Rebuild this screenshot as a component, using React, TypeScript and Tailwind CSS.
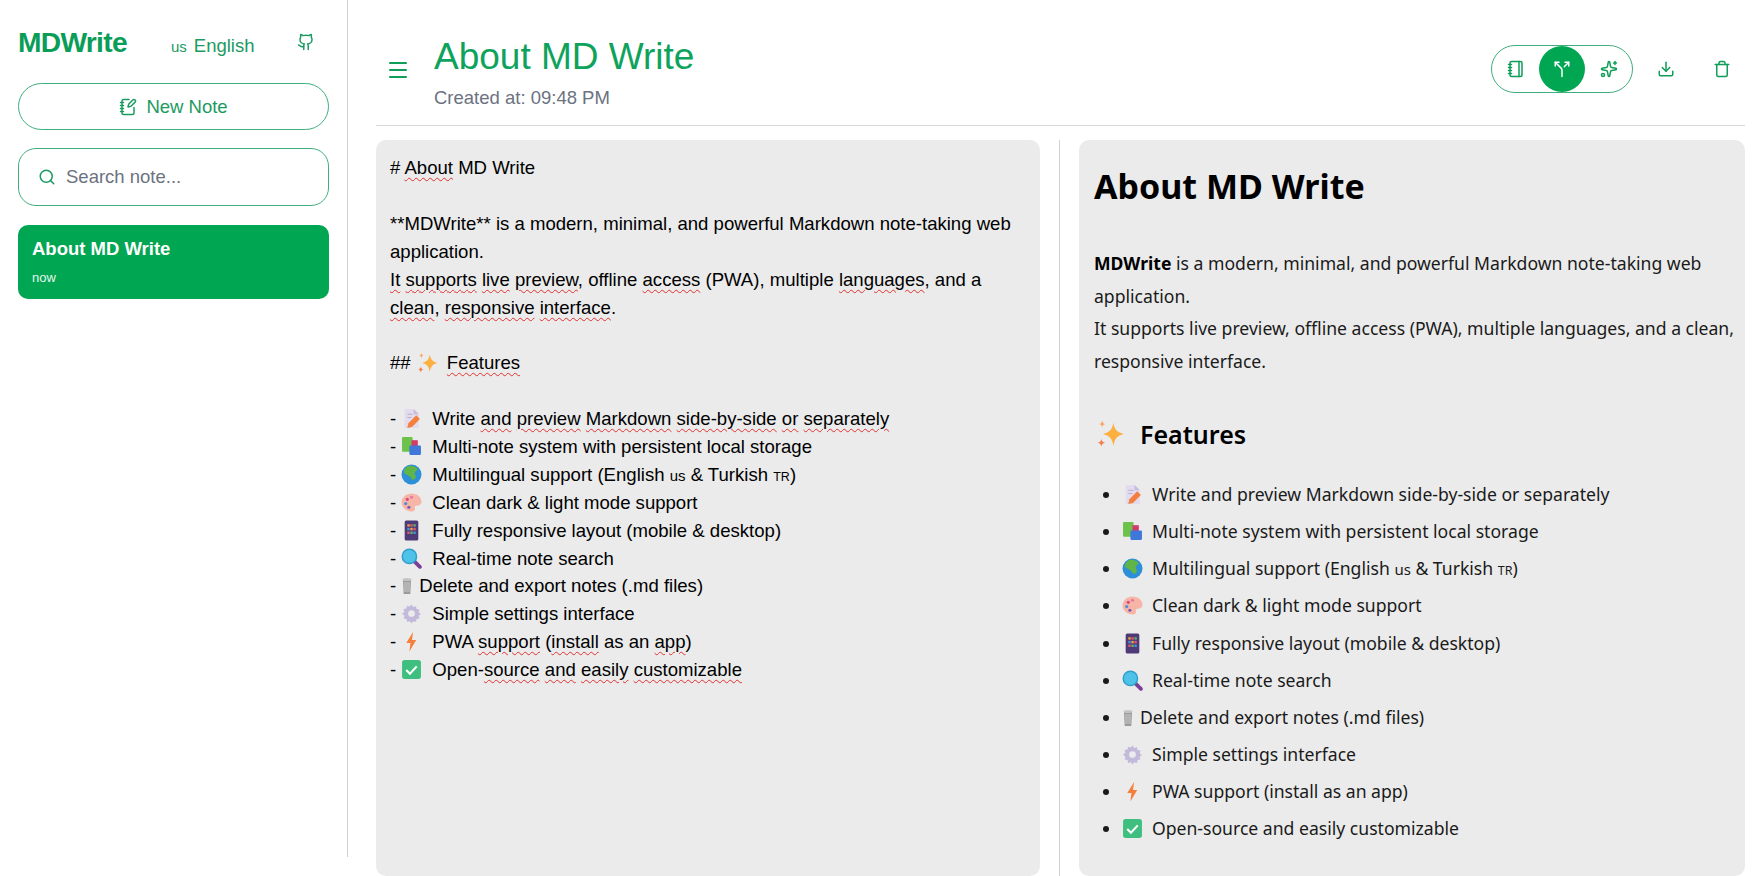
import type { ReactNode } from "react"
import { Download, Github, Menu, Notebook, NotebookPen, Search, Sparkles, Split, Trash } from "lucide-react"

const sans = "font-['Liberation_Sans',Arial,sans-serif]"
const preview = "font-['Noto_Sans',sans-serif]"

// spell-check squiggle under a word in the editor
function S({ children }: { children: ReactNode }) {
  return (
    <span className="underline decoration-wavy decoration-[#e03131] decoration-1 underline-offset-[3px]">{children}</span>
  )
}

function Emoji({ children }: { children: ReactNode }) {
  return (
    <svg viewBox="0 0 20 20" className="inline-block w-[21px] h-[21px] align-[-4px]">
      {children}
    </svg>
  )
}

const sparkleParts = (
  <>
    <path d="M11.500 3c.8 4.400 2.400 6 6.500 7-4.100 1-5.700 2.600-6.500 7.500-.8-4.900-2.400-6.500-6.500-7.500 4.100-1 5.700-2.600 6.500-7z" fill="#fbb040" />
    <path d="M4.500 1.500c.3 1.500.8 2 2 2.300-1.200.3-1.700.8-2 2.200-.3-1.400-.8-1.900-2-2.200 1.200-.3 1.700-.8 2-2.300z" fill="#f9a66c" />
    <path d="M4 13c.3 1.600.9 2.200 2.300 2.500-1.400.3-2 .9-2.300 2.500-.3-1.600-.9-2.200-2.300-2.500 1.400-.3 2-.9 2.300-2.500z" fill="#f47f4f" />
  </>
)

const emojis: Record<string, ReactNode> = {
  memo: (
    <Emoji>
      <path d="M3.500 1h8.500l5 5v13H3.500z" fill="#e3dcee" />
      <path d="M12 1l5 5h-5z" fill="#c9bcd9" />
      <path d="M6 6h5M6 9h4" stroke="#b9aecb" />
      <path d="M6 19l1-4.500 7.500-7.500 3.500 3.500-7.500 7.500z" fill="#f5803e" />
    </Emoji>
  ),
  books: (
    <Emoji>
      <rect x="1" y="1" width="10" height="14" rx="1" fill="#6cc24a" />
      <rect x="10" y="4" width="6" height="12" fill="#d13a6a" />
      <rect x="8" y="9" width="11" height="9" rx="1" fill="#3f78d9" />
    </Emoji>
  ),
  globe: (
    <Emoji>
      <circle cx="10" cy="10" r="9.500" fill="#2c8fd8" />
      <path d="M7 2c3-1 7 0 9 3-1 2-3 2-3 4s2 2 1 4-3 3-4 1-3-3-5-4-3-2-2-4 2-3 4-4z" fill="#5fb548" />
    </Emoji>
  ),
  palette: (
    <Emoji>
      <path d="M10 1.500c5.200 0 9.500 3.400 9.500 7.800 0 2.800-2.300 3.700-4.500 3.700-1.700 0-2.300 1-1.800 2.200.6 1.500-.2 3.300-3.200 3.300-5 0-9.500-3.800-9.500-8.500s4.500-8.500 9.500-8.500z" fill="#f7b5a8" />
      <circle cx="6" cy="7" r="1.500" fill="#d84a7d" />
      <circle cx="10" cy="5" r="1.500" fill="#e8789f" />
      <circle cx="4.500" cy="11" r="1.500" fill="#4b8fd8" />
      <circle cx="7.500" cy="14.500" r="1.500" fill="#7a5bb5" />
    </Emoji>
  ),
  tablet: (
    <Emoji>
      <rect x="3.500" y="0.500" width="13" height="19" rx="1.500" fill="#4f3a78" />
      <rect x="6" y="4" width="2.300" height="2.300" fill="#e8a33d" />
      <rect x="8.900" y="4" width="2.300" height="2.300" fill="#e2566f" />
      <rect x="11.800" y="4" width="2.300" height="2.300" fill="#58b368" />
      <rect x="6" y="7.500" width="2.300" height="2.300" fill="#4b8fd8" />
      <rect x="8.900" y="7.500" width="2.300" height="2.300" fill="#e8a33d" />
      <rect x="11.800" y="7.500" width="2.300" height="2.300" fill="#e2566f" />
      <rect x="6" y="11" width="2.300" height="2.300" fill="#e2566f" />
      <rect x="8.900" y="11" width="2.300" height="2.300" fill="#58b368" />
      <rect x="11.800" y="11" width="2.300" height="2.300" fill="#4b8fd8" />
    </Emoji>
  ),
  search: (
    <Emoji>
      <path d="M12 12l6 6" stroke="#7b3f98" strokeWidth="3.500" strokeLinecap="round" />
      <circle cx="8" cy="8" r="6.800" fill="#4ec2e8" stroke="#2f9fca" strokeWidth="1.400" />
    </Emoji>
  ),
  trash: (
    <svg viewBox="0 0 12 20" className="inline-block w-[12px] h-[20px] align-[-4px]">
      <path d="M2 4h8l-.7 14H2.700z" fill="#9a9a9a" />
      <path d="M4 6v10M6 6v10M8 6v10" stroke="#d8d8d8" strokeWidth=".8" />
      <ellipse cx="6" cy="3.500" rx="4.500" ry="1.500" fill="#c4c4c4" />
    </svg>
  ),
  gear: (
    <Emoji>
      <path d="M10 1.500l1.600 2.300 2.700-.8.500 2.800 2.800.5-.8 2.700 2.300 1.500-2.300 1.600.8 2.700-2.800.5-.5 2.800-2.700-.8-1.600 2.300-1.500-2.300-2.700.8-.5-2.800-2.800-.5.8-2.700L.900 10l2.300-1.500-.8-2.700 2.800-.5.5-2.800 2.700.8z" fill="#c3b9da" />
      <circle cx="10" cy="10" r="3.200" fill="#ebebeb" />
    </Emoji>
  ),
  bolt: (
    <Emoji>
      <path d="M11.500 1L5 11.500h4L8 19.500l6.500-11h-4z" fill="#f5803e" />
    </Emoji>
  ),
  check: (
    <Emoji>
      <rect x="1" y="1" width="18" height="18" rx="2.500" fill="#3fbf7f" />
      <path d="M5 10.500l3.500 3.500L15 7" stroke="#fff" strokeWidth="2" fill="none" />
    </Emoji>
  ),
}

const flags = (
  <>
    Multilingual support (English <span className="text-[15px] leading-none">us</span> & Turkish{" "}
    <span className="text-[12.500px] leading-none">TR</span>)
  </>
)

// [emoji, editor line, preview line]
const features: { emoji: string; editor: ReactNode; text: ReactNode; tight?: boolean }[] = [
  {
    emoji: "memo",
    editor: (
      <>
        Write <S>and</S> <S>preview</S> <S>Markdown</S> <S>side-by-side</S> <S>or</S> <S>separately</S>
      </>
    ),
    text: "Write and preview Markdown side-by-side or separately",
  },
  { emoji: "books", editor: "Multi-note system with persistent local storage", text: "Multi-note system with persistent local storage" },
  { emoji: "globe", editor: flags, text: flags },
  { emoji: "palette", editor: "Clean dark & light mode support", text: "Clean dark & light mode support" },
  { emoji: "tablet", editor: "Fully responsive layout (mobile & desktop)", text: "Fully responsive layout (mobile & desktop)" },
  { emoji: "search", editor: "Real-time note search", text: "Real-time note search" },
  { emoji: "trash", editor: "Delete and export notes (.md files)", text: "Delete and export notes (.md files)", tight: true },
  { emoji: "gear", editor: "Simple settings interface", text: "Simple settings interface" },
  {
    emoji: "bolt",
    editor: (
      <>
        PWA <S>support</S> (<S>install</S> as an <S>app</S>)
      </>
    ),
    text: "PWA support (install as an app)",
  },
  {
    emoji: "check",
    editor: (
      <>
        Open-<S>source</S> <S>and</S> <S>easily</S> <S>customizable</S>
      </>
    ),
    text: "Open-source and easily customizable",
  },
]

function Sidebar() {
  return (
    <aside className="w-[348px] h-[857px] shrink-0 border-r border-[#d1d1d1] px-[18px] flex flex-col">
      <div className="flex items-center h-[83px] text-[#0f9d58]">
        <span className="text-[28.200px] font-bold tracking-tight w-[153px] mt-[2px] text-[#0a9d58]">MDWrite</span>
        <span className="text-[18.500px] w-[126px] mt-[9px] text-[#1c9a62]">
          <span className="text-[15px] mr-[7px]">us</span>English
        </span>
        <Github className="w-[18px] h-[18px] text-[#1c9a62]" strokeWidth={2} />
      </div>
      <button className="h-[47px] rounded-full border border-[#3fae7c] flex items-center justify-center gap-[9px] text-[18.500px] text-[#1c9a62]">
        <NotebookPen className="w-[18px] h-[18px]" strokeWidth={2} />
        New Note
      </button>
      <div className="mt-[18px] h-[58px] rounded-[18px] border border-[#3fae7c] flex items-center pl-[19px] gap-[10px]">
        <Search className="w-[18px] h-[18px] text-[#1c9a62]" strokeWidth={2} />
        <span className="text-[18.500px] text-[#6b7280]">Search note...</span>
      </div>
      <div className="mt-[19px] h-[74px] rounded-[10px] bg-[#00a651] px-[14px] pt-[11px] text-white">
        <div className="text-[18.500px] leading-[26px] font-bold">About MD Write</div>
        <div className="text-[13px] leading-[18px] mt-[7px] text-[#e6f6ee]">now</div>
      </div>
    </aside>
  )
}

function Header() {
  return (
    <header className="h-[126px] shrink-0 border-b border-[#d9d9d9] flex items-center">
      <Menu className="w-[24px] h-[24px] ml-[10px] mt-[14px] text-[#0f9d58]" strokeWidth={2} />
      <div className="ml-[24px] mt-[19px]">
        <h1 className="text-[37px] leading-[50px] text-[#0ea35c]">About MD Write</h1>
        <p className="text-[18.500px] leading-[28px] mt-[2px] text-[#6b7280]">Created at: 09:48 PM</p>
      </div>
      <div className="ml-auto flex items-center mt-[13px] text-[#0f9d58]">
        <div className="w-[142px] h-[48px] rounded-full border border-[#3fae7c] flex items-center justify-between px-[1px]">
          <span className="w-[46px] h-[46px] flex items-center justify-center">
            <Notebook className="w-[18px] h-[18px]" strokeWidth={2} />
          </span>
          <span className="w-[46px] h-[46px] rounded-full bg-[#00a651] text-white flex items-center justify-center">
            <Split className="w-[18px] h-[18px]" strokeWidth={2} />
          </span>
          <span className="w-[46px] h-[46px] flex items-center justify-center">
            <Sparkles className="w-[18px] h-[18px] ml-[2px]" strokeWidth={2} />
          </span>
        </div>
        <Download className="w-[18px] h-[18px] ml-[24px]" strokeWidth={2} />
        <Trash className="w-[18px] h-[18px] ml-[38px] mr-[14px]" strokeWidth={2} />
      </div>
    </header>
  )
}

function Editor() {
  return (
    <div className="flex-1 min-w-0 h-[736px] rounded-[10px] bg-[#ebebeb] px-[14px] pt-[14px] text-[18.570px] leading-[27.900px] text-black whitespace-nowrap">
      <div># <S>About</S> MD Write</div>
      <div className="h-[27.900px]" />
      <div>**MDWrite** is a modern, minimal, and powerful Markdown note-taking web</div>
      <div>application.</div>
      <div>
        <S>It</S> <S>supports</S> <S>live</S> <S>preview</S>, offline <S>access</S> (PWA), multiple <S>languages</S>, and a
      </div>
      <div>
        <S>clean</S>, <S>responsive</S> <S>interface</S>.
      </div>
      <div className="h-[27.900px]" />
      <div className="h-[27.900px]">
        ## <svg viewBox="0 0 20 20" className="inline-block w-[24px] h-[24px] align-[-6px]">{sparkleParts}</svg>
        <span className="ml-[7px]">
          <S>Features</S>
        </span>
      </div>
      <div className="h-[27.900px]" />
      {features.map((f) => (
        <div key={f.emoji} className="h-[27.900px]">
          - {emojis[f.emoji]}
          <span className={f.tight ? "ml-[6px]" : "ml-[10px]"}>{f.editor}</span>
        </div>
      ))}
    </div>
  )
}

function Preview() {
  return (
    <div className={`flex-1 min-w-0 h-[736px] rounded-[10px] bg-[#ebebeb] px-[15px] text-[#1a1a1a] whitespace-nowrap ${preview}`}>
      <h2 className="text-[34px] leading-[46px] font-bold text-black mt-[23px]">About MD Write</h2>
      <p className="mt-[38px] text-[17.600px] leading-[32.500px]">
        <strong className="text-black">MDWrite</strong> is a modern, minimal, and powerful Markdown note-taking web
        <br />
        application.
        <br />
        It supports live preview, offline access (PWA), multiple languages, and a clean,
        <br />
        responsive interface.
      </p>
      <h3 className="mt-[39px] h-[36px] flex items-center text-[25px] leading-[36px] font-semibold text-black">
        <svg viewBox="0 0 20 20" className="w-[32px] h-[32px] ml-[1px]">
          {sparkleParts}
        </svg>
        <span className="ml-[13px]">Features</span>
      </h3>
      <ul className="mt-[24px] list-disc pl-[28px] text-[17.600px] leading-[37.150px]">
        {features.map((f) => (
          <li key={f.emoji} className="h-[37.150px]">
            {emojis[f.emoji]}
            <span className={f.tight ? "ml-[6px]" : "ml-[9px]"}>{f.text}</span>
          </li>
        ))}
      </ul>
    </div>
  )
}

export default function App() {
  return (
    <div className={`h-[876px] overflow-hidden bg-white flex ${sans}`}>
      <Sidebar />
      <main className="flex-1 min-w-0 pl-[28px] pr-[10px] flex flex-col">
        <Header />
        <div className="mt-[14px] flex">
          <Editor />
          <div className="w-px h-[736px] bg-[#d1d1d1] mx-[19px] shrink-0" />
          <Preview />
        </div>
      </main>
    </div>
  )
}
